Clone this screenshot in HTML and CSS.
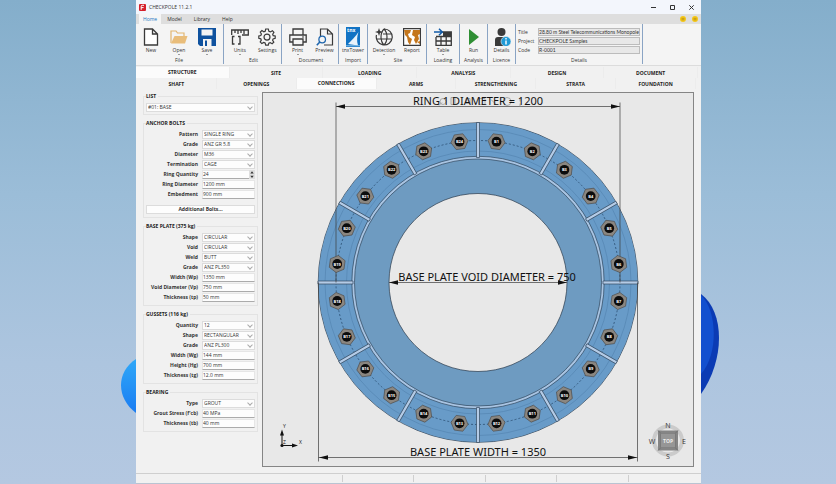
FILE: index.html
```html
<!DOCTYPE html>
<html lang="en">
<head>
<meta charset="utf-8">
<title>CHECKPOLE 11.2.1</title>
<link rel="stylesheet" href="styles.css">
</head>
<body>
<svg class="petal petal-left" viewBox="0 0 15 54" aria-hidden="true"><defs><linearGradient id="pl" x1="0" y1="0" x2="0" y2="1"><stop offset="0" stop-color="#2fa8f8"/><stop offset="1" stop-color="#1a7cf2"/></linearGradient></defs><path d="M15 0C-5 13-5 39 15 54Z" fill="url(#pl)"/></svg>
<svg class="petal petal-right" viewBox="0 0 18 100" aria-hidden="true"><path d="M0 0C24 18 24 66 0 100Z" fill="#0b3bb4"/><path d="M0 1C16 16 18 60 0 80Z" fill="#1350cf"/></svg>

<div class="window">
  <header class="titlebar">
    <svg class="logo" viewBox="0 0 7 7" aria-hidden="true"><rect width="7" height="7" rx="1" fill="#d5202a"/><path d="M2.2 5.8V2.2Q2.2 1.3 3.2 1.3H5M2.2 3.6H4.6" fill="none" stroke="#fff" stroke-width="1"/></svg>
    <h1>CHECKPOLE 11.2.1</h1>
    <div class="window-buttons">
      <button aria-label="Minimize"><svg viewBox="0 0 5 5"><path d="M0 2.5H5"/></svg></button>
      <button aria-label="Maximize"><svg viewBox="0 0 5 5"><path d="M.5.5H4.5V4.5H.5Z"/></svg></button>
      <button aria-label="Close"><svg viewBox="0 0 5 5"><path d="M.3.3 4.7 4.7M4.7.3.3 4.7"/></svg></button>
    </div>
  </header>

  <nav class="menu">
    <a class="active" href="#">Home</a><a href="#">Model</a><a href="#">Library</a><a href="#">Help</a>
    <div class="faces">
      <svg viewBox="0 0 6 6"><circle cx="3" cy="3" r="3" fill="#f5c71a"/><path d="M1.5 2.3H4.5M1.5 3.8H4.5" stroke="#8a6a10" stroke-width=".5"/></svg>
      <svg viewBox="0 0 6 6"><circle cx="3" cy="3" r="3" fill="#f5c71a"/><path d="M1.5 2.3H4.5M1.5 3.8H4.5" stroke="#8a6a10" stroke-width=".5"/></svg>
    </div>
  </nav>

  <div class="ribbon">
    <section class="group file">
      <div class="tools">
        <button><svg viewBox="0 0 18 18"><path d="M2.5 1H10.5L15.500 6V17H2.500ZM10.500 1V6H15.500" fill="#fff" stroke="#3a3a3a" stroke-width="1.300"/></svg>New</button>
        <button class="more"><svg viewBox="0 0 18 18"><path d="M1 15V3H6L7.500 5H14V8" fill="none" stroke="#e2b56f" stroke-width="1.200"/><path d="M1 15.500 4.500 8H17.500L15 15.500Z" fill="#e9bd7a"/></svg>Open</button>
        <button class="more"><svg viewBox="0 0 18 18"><path d="M0 0H18V18H2L0 16Z" fill="#0f529f"/><path d="M3.500 1.500H14.500V7.500H3.500ZM5 11H13.500V18H5Z" fill="#f4f4f4"/><path d="M7 12.500H9V18H7Z" fill="#0f529f"/></svg>Save</button>
      </div>
      <h2>File</h2>
    </section>
    <section class="group edit">
      <div class="tools">
        <button class="more"><svg viewBox="0 0 18 18"><path d="M.7 7V2H17.300V7H11M4 2V5M7 2V6M10 2V5M13 2V6M3.500 8.500H1.500V16H3.500M7 8.500H9V16H7" fill="none" stroke="#3a3a3a" stroke-width="1.300"/></svg>Units</button>
        <button><svg viewBox="0 0 18 18"><path d="M7.700 1H10.300L10.900 3.300 12.400 3.900 14.400 2.700 15.900 4.300 14.700 6.300 15.200 7.700 17.200 8V10.300L15.100 10.900 14.600 12.200 15.800 14.100 14.100 15.700 12.200 14.600 10.800 15.100 10.300 17.200H7.700L7.100 15 5.700 14.500 3.800 15.600 2.200 14 3.300 12.100 2.800 10.800.8 10.300V8L2.800 7.500 3.400 6 2.300 4.200 3.900 2.600 5.800 3.800 7.200 3.200Z" fill="none" stroke="#3a3a3a" stroke-width="1.200"/><circle cx="9" cy="9.100" r="3" fill="none" stroke="#3a3a3a" stroke-width="1.200"/></svg>Settings</button>
      </div>
      <h2>Edit</h2>
    </section>
    <section class="group document">
      <div class="tools">
        <button class="more"><svg viewBox="0 0 18 18"><path d="M4 7V1H14V7M4 14H.800V7H17.200V14H14M4 11H14V17H4Z" fill="none" stroke="#3a3a3a" stroke-width="1.300"/><path d="M13 9H15" stroke="#3a3a3a"/></svg>Print</button>
        <button><svg viewBox="0 0 18 18"><path d="M4.500 8V1H11.500L16.500 6V17H8M11.500 1V6H16.500" fill="none" stroke="#3a3a3a" stroke-width="1.200"/><circle cx="6.200" cy="11.500" r="3.300" fill="#f4f4f4" stroke="#1f66ad" stroke-width="1.300"/><path d="M3.800 14 .800 17.200" stroke="#1f66ad" stroke-width="1.600"/></svg>Preview</button>
      </div>
      <h2>Document</h2>
    </section>
    <section class="group import">
      <div class="tools">
        <button><svg class="tall" viewBox="0 0 18 20"><path d="M2 0H16V20H2Z" fill="#1273c4"/><path d="M14.500 5C12 9 8 13 4 17L14 18.500C12.500 14 13 9 14.500 5Z" fill="#e9f3fb"/><path d="M2 18.800H16" stroke="#8cc5ec"/><text x="3" y="5" class="tnx">tnx</text></svg>tnxTower</button>
      </div>
      <h2>Import</h2>
    </section>
    <section class="group site">
      <div class="tools">
        <button class="more"><svg viewBox="0 0 18 18"><path d="M9 1A8 8 0 1 1 1.500 7M9 1C5 5 5 13 9 17M9 1C13 5 13 13 9 17M1 11H17M8 6H16.500" fill="none" stroke="#3a3a3a" stroke-width="1.200"/><path d="M4 0 5 3 8 4 5 5 4 8 3 5 0 4 3 3Z" fill="#3a3a3a"/></svg>Detection</button>
        <button><svg viewBox="0 0 18 18"><path d="M.600.600H17.400V17.400H.600Z" fill="#fff" stroke="#3a3a3a" stroke-width="1.200"/><path d="M1 2H8L7 5 5 6 6 9 9 11 7 17 5 14 4 9 2 7ZM10 2H17V6L15 7 16 11 13 16 11 12 12 9 9 7ZM14 14 17 13V16Z" fill="#c4761c"/></svg>Report</button>
      </div>
      <h2>Site</h2>
    </section>
    <section class="group loading">
      <div class="tools">
        <button class="more"><svg viewBox="0 0 18 18"><path d="M8 4H17.300V17.300H2V9M2 8.500H17.300M2 13H17.300M7 8V17M12.200 4V17" fill="none" stroke="#3a3a3a" stroke-width="1.300"/><path d="M9 4H17V8H9Z" fill="#3a3a3a"/><path d="M0 4H8M5 .800 8.200 4 5 7.200" fill="none" stroke="#125ba8" stroke-width="1.500"/></svg>Table</button>
      </div>
      <h2>Loading</h2>
    </section>
    <section class="group analysis">
      <div class="tools">
        <button><svg viewBox="0 0 18 18"><path d="M4 1 14 9 4 17Z" fill="#2f8f34"/></svg>Run</button>
      </div>
      <h2>Analysis</h2>
    </section>
    <section class="group licence">
      <div class="tools">
        <button><svg viewBox="0 0 18 18"><circle cx="8.500" cy="4" r="4" fill="#3a3a3a"/><path d="M2 18V12Q2 9 5 9H12V18Z" fill="#3a3a3a"/><circle cx="13" cy="13.500" r="5" fill="#1f9ad6" stroke="#f4f4f4" stroke-width=".600"/><path d="M13 12.500V16.500M13 10V11.500" stroke="#fff" stroke-width="1.400"/></svg>Details</button>
      </div>
      <h2>Licence</h2>
    </section>
    <section class="group details">
      <div class="project">
        <label for="title">Title</label><input id="title" value="28.80 m Steel Telecommunications Monopole" readonly>
        <label for="project">Project</label><input id="project" value="CHECKPOLE Samples" readonly>
        <label for="code">Code</label><input id="code" value="R-0001" readonly>
      </div>
      <h2>Details</h2>
    </section>
  </div>

  <nav class="tabs primary">
    <a class="active" href="#">STRUCTURE</a><a href="#">SITE</a><a href="#">LOADING</a><a href="#">ANALYSIS</a><a href="#">DESIGN</a><a href="#">DOCUMENT</a>
  </nav>
  <nav class="tabs secondary">
    <a href="#">SHAFT</a><a href="#">OPENINGS</a><a class="active" href="#">CONNECTIONS</a><a href="#">ARMS</a><a href="#">STRENGTHENING</a><a href="#">STRATA</a><a href="#">FOUNDATION</a>
  </nav>

  <main>
    <form class="sidebar">
      <fieldset class="list">
        <legend>LIST</legend>
        <span class="drop"><select aria-label="List"><option>#01: BASE</option></select></span>
      </fieldset>
      <fieldset>
        <legend>ANCHOR BOLTS</legend>
        <div class="fields">
          <label for="pattern">Pattern</label><span class="drop"><select id="pattern"><option>SINGLE RING</option></select></span>
          <label for="bgrade">Grade</label><span class="drop"><select id="bgrade"><option>ANZ GR 5.8</option></select></span>
          <label for="bdia">Diameter</label><span class="drop"><select id="bdia"><option>M36</option></select></span>
          <label for="term">Termination</label><span class="drop"><select id="term"><option>CAGE</option></select></span>
          <label for="rq">Ring Quantity</label><span class="spin"><input id="rq" type="number" value="24"><svg viewBox="0 0 5 8" aria-hidden="true"><path d="M1 3 2.500 1 4 3ZM1 5 2.500 7 4 5Z"/></svg></span>
          <label for="rd">Ring Diameter</label><input id="rd" value="1200 mm">
          <label for="emb">Embedment</label><input id="emb" value="900 mm">
        </div>
        <button type="button" class="extra">Additional Bolts...</button>
      </fieldset>
      <fieldset>
        <legend>BASE PLATE (375 kg)</legend>
        <div class="fields">
          <label for="pshape">Shape</label><span class="drop"><select id="pshape"><option>CIRCULAR</option></select></span>
          <label for="void">Void</label><span class="drop"><select id="void"><option>CIRCULAR</option></select></span>
          <label for="weld">Weld</label><span class="drop"><select id="weld"><option>BUTT</option></select></span>
          <label for="pgrade">Grade</label><span class="drop"><select id="pgrade"><option>ANZ PL350</option></select></span>
          <label for="wp">Width (Wp)</label><input id="wp" value="1350 mm">
          <label for="vp">Void Diameter (Vp)</label><input id="vp" value="750 mm">
          <label for="tp">Thickness (tp)</label><input id="tp" value="50 mm">
        </div>
      </fieldset>
      <fieldset>
        <legend>GUSSETS (116 kg)</legend>
        <div class="fields">
          <label for="qty">Quantity</label><span class="drop"><select id="qty"><option>12</option></select></span>
          <label for="gshape">Shape</label><span class="drop"><select id="gshape"><option>RECTANGULAR</option></select></span>
          <label for="ggrade">Grade</label><span class="drop"><select id="ggrade"><option>ANZ PL300</option></select></span>
          <label for="wg">Width (Wg)</label><input id="wg" value="144 mm">
          <label for="hg">Height (Hg)</label><input id="hg" value="700 mm">
          <label for="tg">Thickness (tg)</label><input id="tg" value="12.0 mm">
        </div>
      </fieldset>
      <fieldset>
        <legend>BEARING</legend>
        <div class="fields">
          <label for="type">Type</label><span class="drop"><select id="type"><option>GROUT</option></select></span>
          <label for="fcb">Grout Stress (f'cb)</label><input id="fcb" value="40 MPa">
          <label for="tb">Thickness (tb)</label><input id="tb" value="40 mm">
        </div>
      </fieldset>
    </form>

    <div class="canvas">
      <svg viewBox="0 0 430 372" role="img" aria-label="Base plate drawing">
        <defs>
          <path id="gusset" d="M-1.500-160V-125H1.500V-160Z"/>
          <path id="hex" d="M8.600 0 4.300 7.400H-4.300L-8.600 0-4.300-7.400H4.300Z"/>
          <circle id="bolt" r="4.900" fill="#0c0c0c" stroke="none"/>
          <path id="arrow" d="M0 0 9-2.200V2.200Z"/>
        </defs>
        <g transform="translate(215 189)">
          <path d="M-159.800 0A159.800 159.800 0 1 0 159.800 0A159.800 159.800 0 1 0-159.800 0ZM-89 0A89 89 0 1 1 89 0A89 89 0 1 1-89 0Z" fill="#6e9bc1" stroke="#29394a" stroke-width=".700"/>
          <circle r="142.500" class="band"/>
          <circle r="153" class="weld"/><circle r="131.500" class="weld"/>
          <circle r="124.800" class="shaft"/><circle r="123.500" class="edge"/><circle r="126.200" class="edge"/>
          <circle r="142" class="pitch"/>
          <g class="gussets">
            <use href="#gusset"/><use href="#gusset" transform="rotate(30)"/><use href="#gusset" transform="rotate(60)"/><use href="#gusset" transform="rotate(90)"/><use href="#gusset" transform="rotate(120)"/><use href="#gusset" transform="rotate(150)"/><use href="#gusset" transform="rotate(180)"/><use href="#gusset" transform="rotate(210)"/><use href="#gusset" transform="rotate(240)"/><use href="#gusset" transform="rotate(270)"/><use href="#gusset" transform="rotate(300)"/><use href="#gusset" transform="rotate(330)"/>
          </g>
          <g class="dims">
            <path class="lines" d="M-142-180V0M142-180V0M-142-176H142M-159.500 0V179M159.500 0V179M-159.500 175H159.500M-89 0H89"/>
            <use href="#arrow" x="-142" y="-176"/><use href="#arrow" transform="translate(142 -176) rotate(180)"/>
            <use href="#arrow" x="-159" y="175"/><use href="#arrow" transform="translate(159 175) rotate(180)"/>
            <use href="#arrow" x="-89"/><use href="#arrow" transform="translate(89 0) rotate(180)"/>
          </g>
          <g class="bolts">
            <g transform="translate(18.500 -140.800)"><use href="#hex" transform="rotate(7.500)"/><use href="#bolt"/><text y="1.500">B1</text></g>
            <g transform="translate(54.300 -131.200)"><use href="#hex" transform="rotate(22.500)"/><use href="#bolt"/><text y="1.500">B2</text></g>
            <g transform="translate(86.400 -112.700)"><use href="#hex" transform="rotate(37.500)"/><use href="#bolt"/><text y="1.500">B3</text></g>
            <g transform="translate(112.700 -86.400)"><use href="#hex" transform="rotate(52.500)"/><use href="#bolt"/><text y="1.500">B4</text></g>
            <g transform="translate(131.200 -54.300)"><use href="#hex" transform="rotate(67.500)"/><use href="#bolt"/><text y="1.500">B5</text></g>
            <g transform="translate(140.800 -18.500)"><use href="#hex" transform="rotate(82.500)"/><use href="#bolt"/><text y="1.500">B6</text></g>
            <g transform="translate(140.800 18.500)"><use href="#hex" transform="rotate(97.500)"/><use href="#bolt"/><text y="1.500">B7</text></g>
            <g transform="translate(131.200 54.300)"><use href="#hex" transform="rotate(112.500)"/><use href="#bolt"/><text y="1.500">B8</text></g>
            <g transform="translate(112.700 86.400)"><use href="#hex" transform="rotate(127.500)"/><use href="#bolt"/><text y="1.500">B9</text></g>
            <g transform="translate(86.400 112.700)"><use href="#hex" transform="rotate(142.500)"/><use href="#bolt"/><text y="1.500">B10</text></g>
            <g transform="translate(54.300 131.200)"><use href="#hex" transform="rotate(157.500)"/><use href="#bolt"/><text y="1.500">B11</text></g>
            <g transform="translate(18.500 140.800)"><use href="#hex" transform="rotate(172.500)"/><use href="#bolt"/><text y="1.500">B12</text></g>
            <g transform="translate(-18.500 140.800)"><use href="#hex" transform="rotate(187.500)"/><use href="#bolt"/><text y="1.500">B13</text></g>
            <g transform="translate(-54.300 131.200)"><use href="#hex" transform="rotate(202.500)"/><use href="#bolt"/><text y="1.500">B14</text></g>
            <g transform="translate(-86.400 112.700)"><use href="#hex" transform="rotate(217.500)"/><use href="#bolt"/><text y="1.500">B15</text></g>
            <g transform="translate(-112.700 86.400)"><use href="#hex" transform="rotate(232.500)"/><use href="#bolt"/><text y="1.500">B16</text></g>
            <g transform="translate(-131.200 54.300)"><use href="#hex" transform="rotate(247.500)"/><use href="#bolt"/><text y="1.500">B17</text></g>
            <g transform="translate(-140.800 18.500)"><use href="#hex" transform="rotate(262.500)"/><use href="#bolt"/><text y="1.500">B18</text></g>
            <g transform="translate(-140.800 -18.500)"><use href="#hex" transform="rotate(277.500)"/><use href="#bolt"/><text y="1.500">B19</text></g>
            <g transform="translate(-131.200 -54.300)"><use href="#hex" transform="rotate(292.500)"/><use href="#bolt"/><text y="1.500">B20</text></g>
            <g transform="translate(-112.700 -86.400)"><use href="#hex" transform="rotate(307.500)"/><use href="#bolt"/><text y="1.500">B21</text></g>
            <g transform="translate(-86.400 -112.700)"><use href="#hex" transform="rotate(322.500)"/><use href="#bolt"/><text y="1.500">B22</text></g>
            <g transform="translate(-54.300 -131.200)"><use href="#hex" transform="rotate(337.500)"/><use href="#bolt"/><text y="1.500">B23</text></g>
            <g transform="translate(-18.500 -140.800)"><use href="#hex" transform="rotate(352.500)"/><use href="#bolt"/><text y="1.500">B24</text></g>
          </g>
          <g class="viewtools"><circle cx="-35" cy="-181" r="3"/><path d="M-39-177 -36-180M-27-185H-23V-178H-27ZM-12-184H-8V-179H-12ZM1-184H7V-178H1ZM13-183 18-178M42-184V-181M42-179V-176"/><circle cx="29" cy="-181" r="4"/></g>
          <g class="dimtext">
            <text y="-178">RING 1 DIAMETER = 1200</text>
            <text x="9" y="-2">BASE PLATE VOID DIAMETER = 750</text>
            <text y="173">BASE PLATE WIDTH = 1350</text>
          </g>
        </g>
        <g class="axes">
          <path d="M19 352V340M19 352H31" fill="none" stroke="#111"/><path d="M17 342 19 336 21 342ZM29 350 35 352 29 354Z"/><circle cx="19" cy="352" r="1.600"/>
          <text x="20" y="334">Y</text><text x="36" y="350">X</text><text x="20" y="350">Z</text>
        </g>
        <g class="cube" transform="translate(405 347)">
          <circle r="14" fill="none" stroke="#cbcbcb" stroke-width="4"/>
          <path d="M-10-10H10V10H-10Z" fill="#858585"/><path d="M-10-10-7-7H7L10-10M-10 10-7 7H7L10 10M-7-7V7M7-7V7" fill="none" stroke="#686868" stroke-width=".700"/><path d="M-7-7H7V7H-7Z" fill="#969696"/>
          <text class="top" y="2">TOP</text>
          <text y="-13">N</text><text y="18">S</text><text x="-16" y="3">W</text><text x="16" y="3">E</text>
        </g>
      </svg>
    </div>
  </main>

  <footer class="status"><span></span><span></span><span></span><span></span><span></span><span></span></footer>
</div>
</body>
</html>
```
FILE: styles.css
```css
* { box-sizing: border-box; }

body {
  margin: 0;
  min-height: 100vh;
  padding: 0 135px 0 136px;
  position: relative;
  overflow-x: hidden;
  background: linear-gradient(180deg, #84aecb 0, #9bbdd8 40%, #adc5df 75%, #b4c8e1 100%);
  font: 5px/8px "Open Sans", "Noto Sans", sans-serif;
  color: #333;
}

button, input, select { font: inherit; color: inherit; margin: 0; border-radius: 0; }
button { border: 0; padding: 0; background: none; }
a { color: inherit; text-decoration: none; }
h1, h2 { margin: 0; font: inherit; }

.petal { position: absolute; }
.petal-left { width: 15px; height: 54px; left: 121px; top: 359px; }
.petal-right { width: 18px; height: 100px; right: 117px; top: 294px; }

.window {
  position: relative;
  min-height: 100vh;
  display: flex;
  flex-direction: column;
  background: #f1f1f1;
}

.titlebar {
  display: flex;
  align-items: center;
  height: 14px;
  padding: 0 7px 0 3px;
  gap: 3px;
  background: #f3f6fc;
}
.titlebar h1 { line-height: 12px; }
.logo { width: 7px; height: 7px; }
.window-buttons { display: flex; gap: 14px; margin-left: auto; }
.window-buttons svg { display: block; width: 5px; height: 5px; fill: none; stroke: #333; stroke-width: 1; }

.menu {
  display: flex;
  height: 10px;
  padding: 0 3px;
  background: #dedede;
  line-height: 10px;
}
.menu a { padding: 0 6px; }
.menu .active { padding: 0 4px; background: #f5f5f5; color: #1976c4; }
.faces { display: flex; gap: 6px; align-items: center; margin-left: auto; }
.faces svg { width: 6px; height: 6px; }

.ribbon {
  display: flex;
  height: 42px;
  padding-bottom: 1px;
  background: #f4f4f4;
  border-bottom: 1px solid #dcdcdc;
}
.group {
  display: flex;
  flex-direction: column;
  justify-content: space-between;
  border-right: 1px solid #8aa4c4;
  padding-top: 4px;
  text-align: center;
}
.file { width: 88px; padding-right: 2px; padding-left: 1px; }
.edit { width: 58px; padding-left: 2px; }
.document { width: 57px; padding-left: 2px; }
.import { width: 29px; }
.site { width: 59px; padding-left: 2px; }
.loading { width: 33px; }
.analysis, .licence { width: 28px; }
.details { width: 127px; padding-right: 2px; padding-left: 2px; }
.tools { display: flex; }
.tools button {
  flex: 1 1 0;
  display: flex;
  flex-direction: column;
  align-items: center;
  line-height: 8px;
  position: relative;
}
.tools svg { display: block; width: 18px; height: 18px; }
.tools .tall { width: 18px; height: 20px; margin: -1px 0; }
.tnx { font: bold 5px "Open Sans", sans-serif; fill: #fff; }
.more::after {
  content: "";
  position: absolute;
  bottom: -2px;
  border: 1px solid transparent;
  border-top-color: #444;
}
.project {
  display: grid;
  grid-template-columns: 18px 1fr;
  gap: 1px 2px;
  text-align: left;
}
.project input {
  width: 100%;
  min-width: 0;
  height: 8px;
  padding: 0;
  border: 1px solid #bcbcbc;
  background: #e8e8e8;
  font-family: Lato, "Open Sans", sans-serif;
}

.tabs { display: grid; grid-auto-flow: column; grid-auto-columns: 1fr; text-align: center; font-weight: 700; color: #222; }
.tabs a { border-right: 1px solid #ececec; line-height: 12px; height: 11px; }
.tabs .active { background: #fbfbfb; line-height: 10px; }
.primary { margin: 1px 3px 0 0; }
.secondary { margin: 0 5px 0 1px; }

main { flex: 1; display: flex; padding: 3px 7px 6px; gap: 4px; }
.sidebar { width: 115px; display: flex; flex-direction: column; gap: 4px; }
fieldset { margin: 0; min-width: 0; padding: 3px 2px; border: 1px solid #e3e3e3; }
legend { padding: 0 2px 0 0; font-weight: 700; color: #222; }
.list { padding-bottom: 2px; }
.fields { display: grid; grid-template-columns: 1fr 53px; grid-auto-rows: 9px; gap: 1px 4px; }
.fields label { text-align: right; font-weight: 700; line-height: 9px; white-space: nowrap; }
.fields input, .drop select {
  display: block;
  width: 100%;
  height: 9px;
  padding: 0 1px;
  border: 1px solid #e6e6e6;
  background: #fdfdfd;
}
.fields input { padding: 0 0 2px; border-bottom-color: #ababab; }
.drop { position: relative; display: block; }
.drop select { appearance: none; border-color: #dcdcdc; line-height: 7px; }
.drop::after {
  content: "";
  position: absolute;
  right: 3px;
  top: 2px;
  width: 3px;
  height: 3px;
  border: solid #aaa;
  border-width: 0 1px 1px 0;
  transform: rotate(45deg);
}
.spin { position: relative; }
.spin input { appearance: textfield; }
.spin svg { position: absolute; right: 0; top: 0; width: 6px; height: 9px; background: #dedede; fill: #333; }
.extra {
  display: block;
  width: 100%;
  height: 9px;
  margin-top: 6px;
  background: #fdfdfd;
  border: 1px solid #dcdcdc;
  font-weight: 700;
  line-height: 7px;
}

.canvas { flex: 1; min-width: 0; display: flex; border: 1px solid #858585; background: #e8e8e8; }
.canvas > svg { display: block; width: 100%; height: auto; }
.band { fill: none; stroke: #689bc8; stroke-width: 34; }
.weld { fill: none; stroke: #5585b2; stroke-width: .7; }
.shaft { fill: none; stroke: #a9c4e2; stroke-width: 2.4; }
.edge { fill: none; stroke: #34495f; stroke-width: .7; }
.pitch { fill: none; stroke: #294c70; stroke-width: .8; stroke-dasharray: 2 2; }
.gussets { fill: #b4cbe6; stroke: #34495f; stroke-width: .7; }
.dims { fill: #111; }
.lines { stroke: #3c3c3c; stroke-width: .7; }
.bolts { fill: #8a8680; stroke: #4a4744; stroke-width: .6; }
.bolts text { fill: #fff; stroke: none; font: bold 4px "Open Sans", sans-serif; text-anchor: middle; }
.dimtext { font: 11px "Noto Sans", sans-serif; fill: #111; text-anchor: middle; }
.viewtools { fill: none; stroke: #999; stroke-width: .8; }
.axes { font: 5px "Open Sans", sans-serif; fill: #111; }
.cube { font: 7px "Open Sans", sans-serif; fill: #333; text-anchor: middle; }
.cube .top { font-size: 5px; font-weight: 700; fill: #eee; }

.status {
  display: grid;
  grid-template-columns: 206px repeat(5, 1fr);
  height: 11px;
  border-top: 1px solid #cfcfcf;
  border-bottom: 1px solid #b9c4d2;
  padding: 1px;
}
.status span { border-right: 1px solid #cfcfcf; }
.status span:last-child { border: 0; }
```
